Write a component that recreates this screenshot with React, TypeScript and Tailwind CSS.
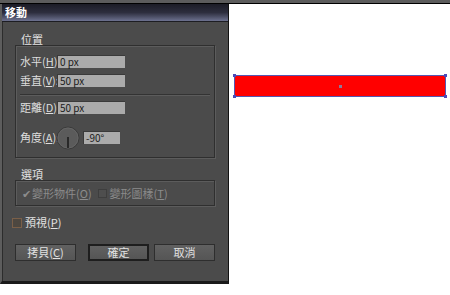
import React from "react";

const font = {
  fontFamily: '"Noto Sans CJK TC", "Noto Sans", "Liberation Sans", sans-serif',
};

const Key = ({ k }: { k: string }) => (
  <>
    (<span className="underline underline-offset-1">{k}</span>)
  </>
);

const Field = ({ value, w = "w-[68px]" }: { value: string; w?: string }) => (
  <div
    className={`${w} h-[13px] bg-[#ababab] border-t border-l border-[#3a3a3a] text-[#1c1c1c] text-[10px] leading-[12px] pl-[2px]`}
  >
    {value}
  </div>
);

const Row = ({ label, k, value }: { label: string; k: string; value: string }) => (
  <div className="flex items-center h-[13px]">
    <span className="w-[37px] text-[11px] leading-[13px] text-[#dedede] whitespace-nowrap">
      {label}
      <Key k={k} />:
    </span>
    <Field value={value} />
  </div>
);

const Button = ({
  children,
  primary,
}: {
  children: React.ReactNode;
  primary?: boolean;
}) => (
  <div
    className={`w-[61px] h-[17px] flex items-center justify-center text-[11px] text-[#e2e2e2] bg-gradient-to-b from-[#616161] to-[#555555] ${
      primary ? "border-2 border-[#1e1e1e]" : "border border-[#2e2e2e]"
    }`}
  >
    {children}
  </div>
);

export default function App() {
  return (
    <div className="w-[450px] h-[295px] bg-white overflow-hidden" style={font}>
      <div className="h-[3px] bg-[#5c5c5c]" />
      <div className="h-px bg-black" />
      <div className="flex">
        {/* dialog */}
        <div className="w-[229px] h-[280px] flex flex-col bg-[#4b4b4b] border-l-2 border-l-[#5d5d5d] border-r border-r-[#111] border-b-[3px] border-b-[#1a1a1a]">
          <div className="h-[18px] flex items-center pl-[3px] bg-gradient-to-b from-[#1c1c26] via-[#2d2e3e] to-[#6d7290] border-b border-[#1d1d22]">
            <span className="text-[11px] font-bold text-white leading-none">移動</span>
          </div>
          <div className="flex-1 flex flex-col border-l border-[#2c2c2c] pl-[12px] pr-[12px]">
            {/* 位置 */}
            <div className="mt-[11px] h-[12px] pl-[6px] text-[11px] leading-[12px] text-[#e2e2e2]">
              位置
            </div>
            <div className="w-[200px] h-[113px] border border-[#2f2f2f] shadow-[1px_1px_0_#5c5c5c,inset_1px_1px_0_#5c5c5c] pt-[9px] pl-[4px] pr-[4px]">
              <Row label="水平" k="H" value="0 px" />
              <div className="mt-[6px]">
                <Row label="垂直" k="V" value="50 px" />
              </div>
              <div className="mt-[7px] h-px bg-[#333] shadow-[0_1px_0_#5c5c5c]" />
              <div className="mt-[6px]">
                <Row label="距離" k="D" value="50 px" />
              </div>
              <div className="mt-[12px] flex items-center h-[23px]">
                <span className="w-[36px] text-[11px] leading-[13px] text-[#dedede] whitespace-nowrap">
                  角度
                  <Key k="A" />:
                </span>
                <svg width="24" height="24" viewBox="0 0 24 24">
                  <circle cx="12" cy="12" r="11" fill="#5b5b5b" stroke="#3a3a3a" strokeWidth="1" />
                  <circle cx="12" cy="12" r="10" fill="none" stroke="#676767" strokeWidth="0.8" />
                  <line x1="12" y1="11" x2="12" y2="22" stroke="#151515" strokeWidth="1.4" />
                </svg>
                <div className="ml-[3px]">
                  <Field value="-90°" w="w-[37px]" />
                </div>
              </div>
            </div>

            {/* 選項 */}
            <div className="mt-[10px] h-[12px] pl-[6px] text-[11px] leading-[12px] text-[#e2e2e2]">
              選項
            </div>
            <div className="w-[200px] h-[26px] border border-[#2f2f2f] shadow-[1px_1px_0_#5c5c5c,inset_1px_1px_0_#5c5c5c] flex items-center pl-[6px] text-[11px] text-[#8c8c8c]">
              <span className="text-[#8c8c8c] text-[11px] leading-none mr-[1px]">✔</span>
              <span>
                變形物件
                <Key k="O" />
              </span>
              <span className="ml-[6px] w-[9px] h-[9px] border border-[#3e3e3e] bg-[#4e4e4e]" />
              <span className="ml-[3px]">
                變形圖樣
                <Key k="T" />
              </span>
            </div>

            {/* 預視 */}
            <div className="mt-[11px] -ml-[3px] flex items-center h-[11px]">
              <span className="w-[10px] h-[10px] border border-[#7a5f48] bg-[#4d4740]" />
              <span className="ml-[3px] text-[11px] text-[#e2e2e2]">
                預視
                <Key k="P" />
              </span>
            </div>

            {/* buttons */}
            <div className="mt-[16px] flex">
              <Button>
                拷貝
                <Key k="C" />
              </Button>
              <div className="ml-[12px]">
                <Button primary>確定</Button>
              </div>
              <div className="ml-[5px]">
                <Button>取消</Button>
              </div>
            </div>
          </div>
        </div>

        {/* canvas */}
        <div className="flex-1 pt-[71px] pl-[5px]">
          <div className="relative w-[212px] h-[22px] bg-[#ff0000] border border-[#5656b0]">
            <span className="absolute -left-[2px] -top-[2px] w-[3px] h-[3px] bg-[#4a4ab8]" />
            <span className="absolute -right-[2px] -top-[2px] w-[3px] h-[3px] bg-[#4a4ab8]" />
            <span className="absolute -left-[2px] -bottom-[2px] w-[3px] h-[3px] bg-[#4a4ab8]" />
            <span className="absolute -right-[2px] -bottom-[2px] w-[3px] h-[3px] bg-[#4a4ab8]" />
            <span className="absolute left-[104px] top-[9px] w-[3px] h-[3px] bg-[#8a7a9a]" />
          </div>
        </div>
      </div>
    </div>
  );
}
